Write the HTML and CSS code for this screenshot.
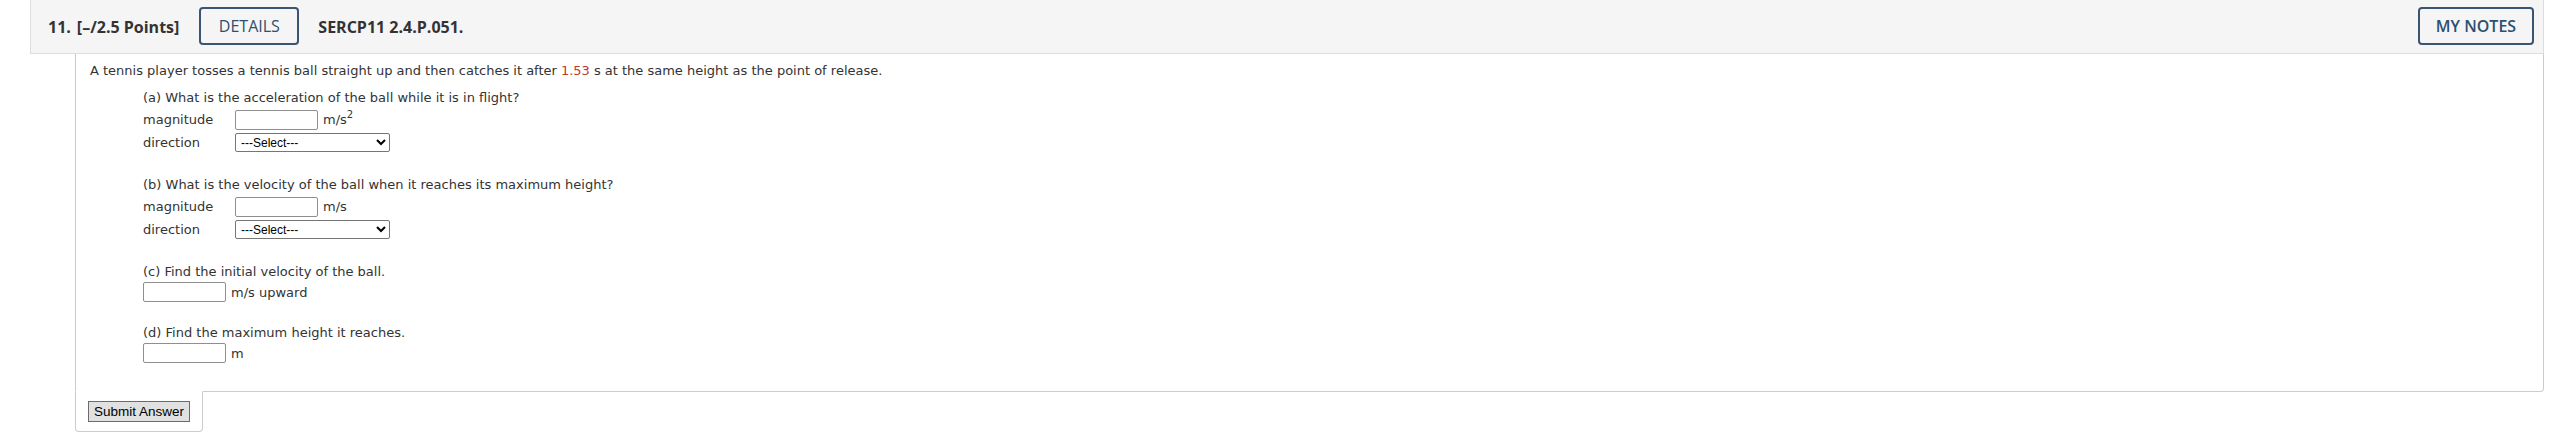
FILE: index.html
```html
<!DOCTYPE html>
<html lang="en">
<head>
<meta charset="utf-8">
<title>Question 11</title>
<link rel="stylesheet" href="styles.css">
</head>
<body>
<div class="question">
  <div class="q-header">
    <span class="q-num">11.</span>
    <span class="q-points">[–/2.5 Points]</span>
    <button class="btn-outline details">DETAILS</button>
    <span class="q-code">SERCP11 2.4.P.051.</span>
    <span class="spacer"></span>
    <button class="btn-outline notes">MY NOTES</button>
  </div>
  <div class="q-body">
    <div class="intro">A tennis player tosses a tennis ball straight up and then catches it after <span class="num">1.53</span> s at the same height as the point of release.</div>

    <div class="part">
      <div class="qline">(a) What is the acceleration of the ball while it is in flight?</div>
      <div class="field"><span class="lbl">magnitude</span><input class="ans" type="text"><span class="unit">m/s<sup>2</sup></span></div>
      <div class="field"><span class="lbl">direction</span><select class="sel"><option>---Select---</option></select></div>
    </div>

    <div class="part">
      <div class="qline">(b) What is the velocity of the ball when it reaches its maximum height?</div>
      <div class="field"><span class="lbl">magnitude</span><input class="ans" type="text"><span class="unit">m/s</span></div>
      <div class="field"><span class="lbl">direction</span><select class="sel"><option>---Select---</option></select></div>
    </div>

    <div class="part">
      <div class="qline">(c) Find the initial velocity of the ball.</div>
      <div class="field short"><input class="ans" type="text"><span class="unit">m/s upward</span></div>
    </div>

    <div class="part">
      <div class="qline">(d) Find the maximum height it reaches.</div>
      <div class="field short"><input class="ans" type="text"><span class="unit">m</span></div>
    </div>
  </div>
  <div class="submit-tab">
    <button class="submit">Submit Answer</button>
  </div>
</div>
</body>
</html>
```

FILE: styles.css
```css
html, body {
  margin: 0;
  padding: 0;
  background: #ffffff;
}

.question {
  margin-left: 30px;
  width: 2514px;
  color: #333333;
}

.q-header {
  display: flex;
  align-items: center;
  height: 53px;
  background: #f5f5f5;
  border: 1px solid #dddddd;
  border-top: none;
  padding: 0 9px 0 17px;
  font-family: "Open Sans", sans-serif;
}

.q-num {
  font-size: 16px;
  font-weight: 700;
  color: #333333;
  margin-right: 6px;
}

.q-points {
  font-size: 16px;
  font-weight: 700;
  color: #333333;
  margin-right: 20px;
}

.q-code {
  font-size: 16px;
  font-weight: 700;
  color: #333333;
  margin-left: 19px;
}

.spacer {
  flex: 1;
}

.btn-outline {
  font-family: "Open Sans", sans-serif;
  font-size: 16px;
  color: #2f4f6f;
  background: transparent;
  border: 2px solid #3a5573;
  border-radius: 4px;
  height: 38px;
  padding: 0 12px;
  margin-top: 2px;
  margin-bottom: 4px;
}

.details {
  width: 100px;
  font-weight: 400;
}

.notes {
  width: 116px;
  font-weight: 600;
}

.q-body {
  margin-left: 45px;
  border: 1px solid #cccccc;
  border-top: none;
  border-radius: 0 0 4px 0;
  padding: 6px 0 28px 14px;
  font-family: "DejaVu Sans", Verdana, sans-serif;
  font-size: 13px;
  color: #333333;
}

.intro {
  height: 20px;
  display: flex;
  align-items: center;
}

.num {
  color: #c0392b;
  margin: 0 4px;
}

.part {
  margin-top: 6px;
  padding-left: 53px;
}

.part + .part {
  margin-top: 19px;
}

.qline {
  height: 22px;
  display: flex;
  align-items: center;
}

.field {
  height: 23px;
  display: flex;
  align-items: center;
}

.field.short {
  height: 20px;
}

.lbl {
  width: 92px;
}

.ans {
  box-sizing: border-box;
  width: 83px;
  height: 20px;
  margin: 0 5px 0 0;
  padding: 0 2px;
  border: 1px solid #8f8f8f;
  border-radius: 2px;
  background: #ffffff;
}

.unit sup {
  font-size: 10px;
  line-height: 0;
  vertical-align: 6px;
}

.sel {
  box-sizing: border-box;
  width: 155px;
  height: 19px;
  margin: 0;
  padding: 0 1px;
  border: 1px solid #767676;
  border-radius: 2px;
  background: #ffffff;
  font-family: "Liberation Sans", Arial, sans-serif;
  font-size: 12px;
  color: #000000;
}

.submit-tab {
  margin-left: 45px;
  margin-top: -1px;
  width: 128px;
  height: 41px;
  box-sizing: border-box;
  border: 1px solid #cccccc;
  border-top: 1px solid #ffffff;
  border-radius: 0 0 4px 4px;
  display: flex;
  align-items: center;
  padding-left: 12px;
}

.submit {
  font-family: "Liberation Sans", Arial, sans-serif;
  font-size: 13.5px;
  color: #000000;
  background: #e1e1e1;
  border: 1px solid #6b6b6b;
  border-radius: 0;
  height: 21px;
  padding: 0 5px;
}
```
